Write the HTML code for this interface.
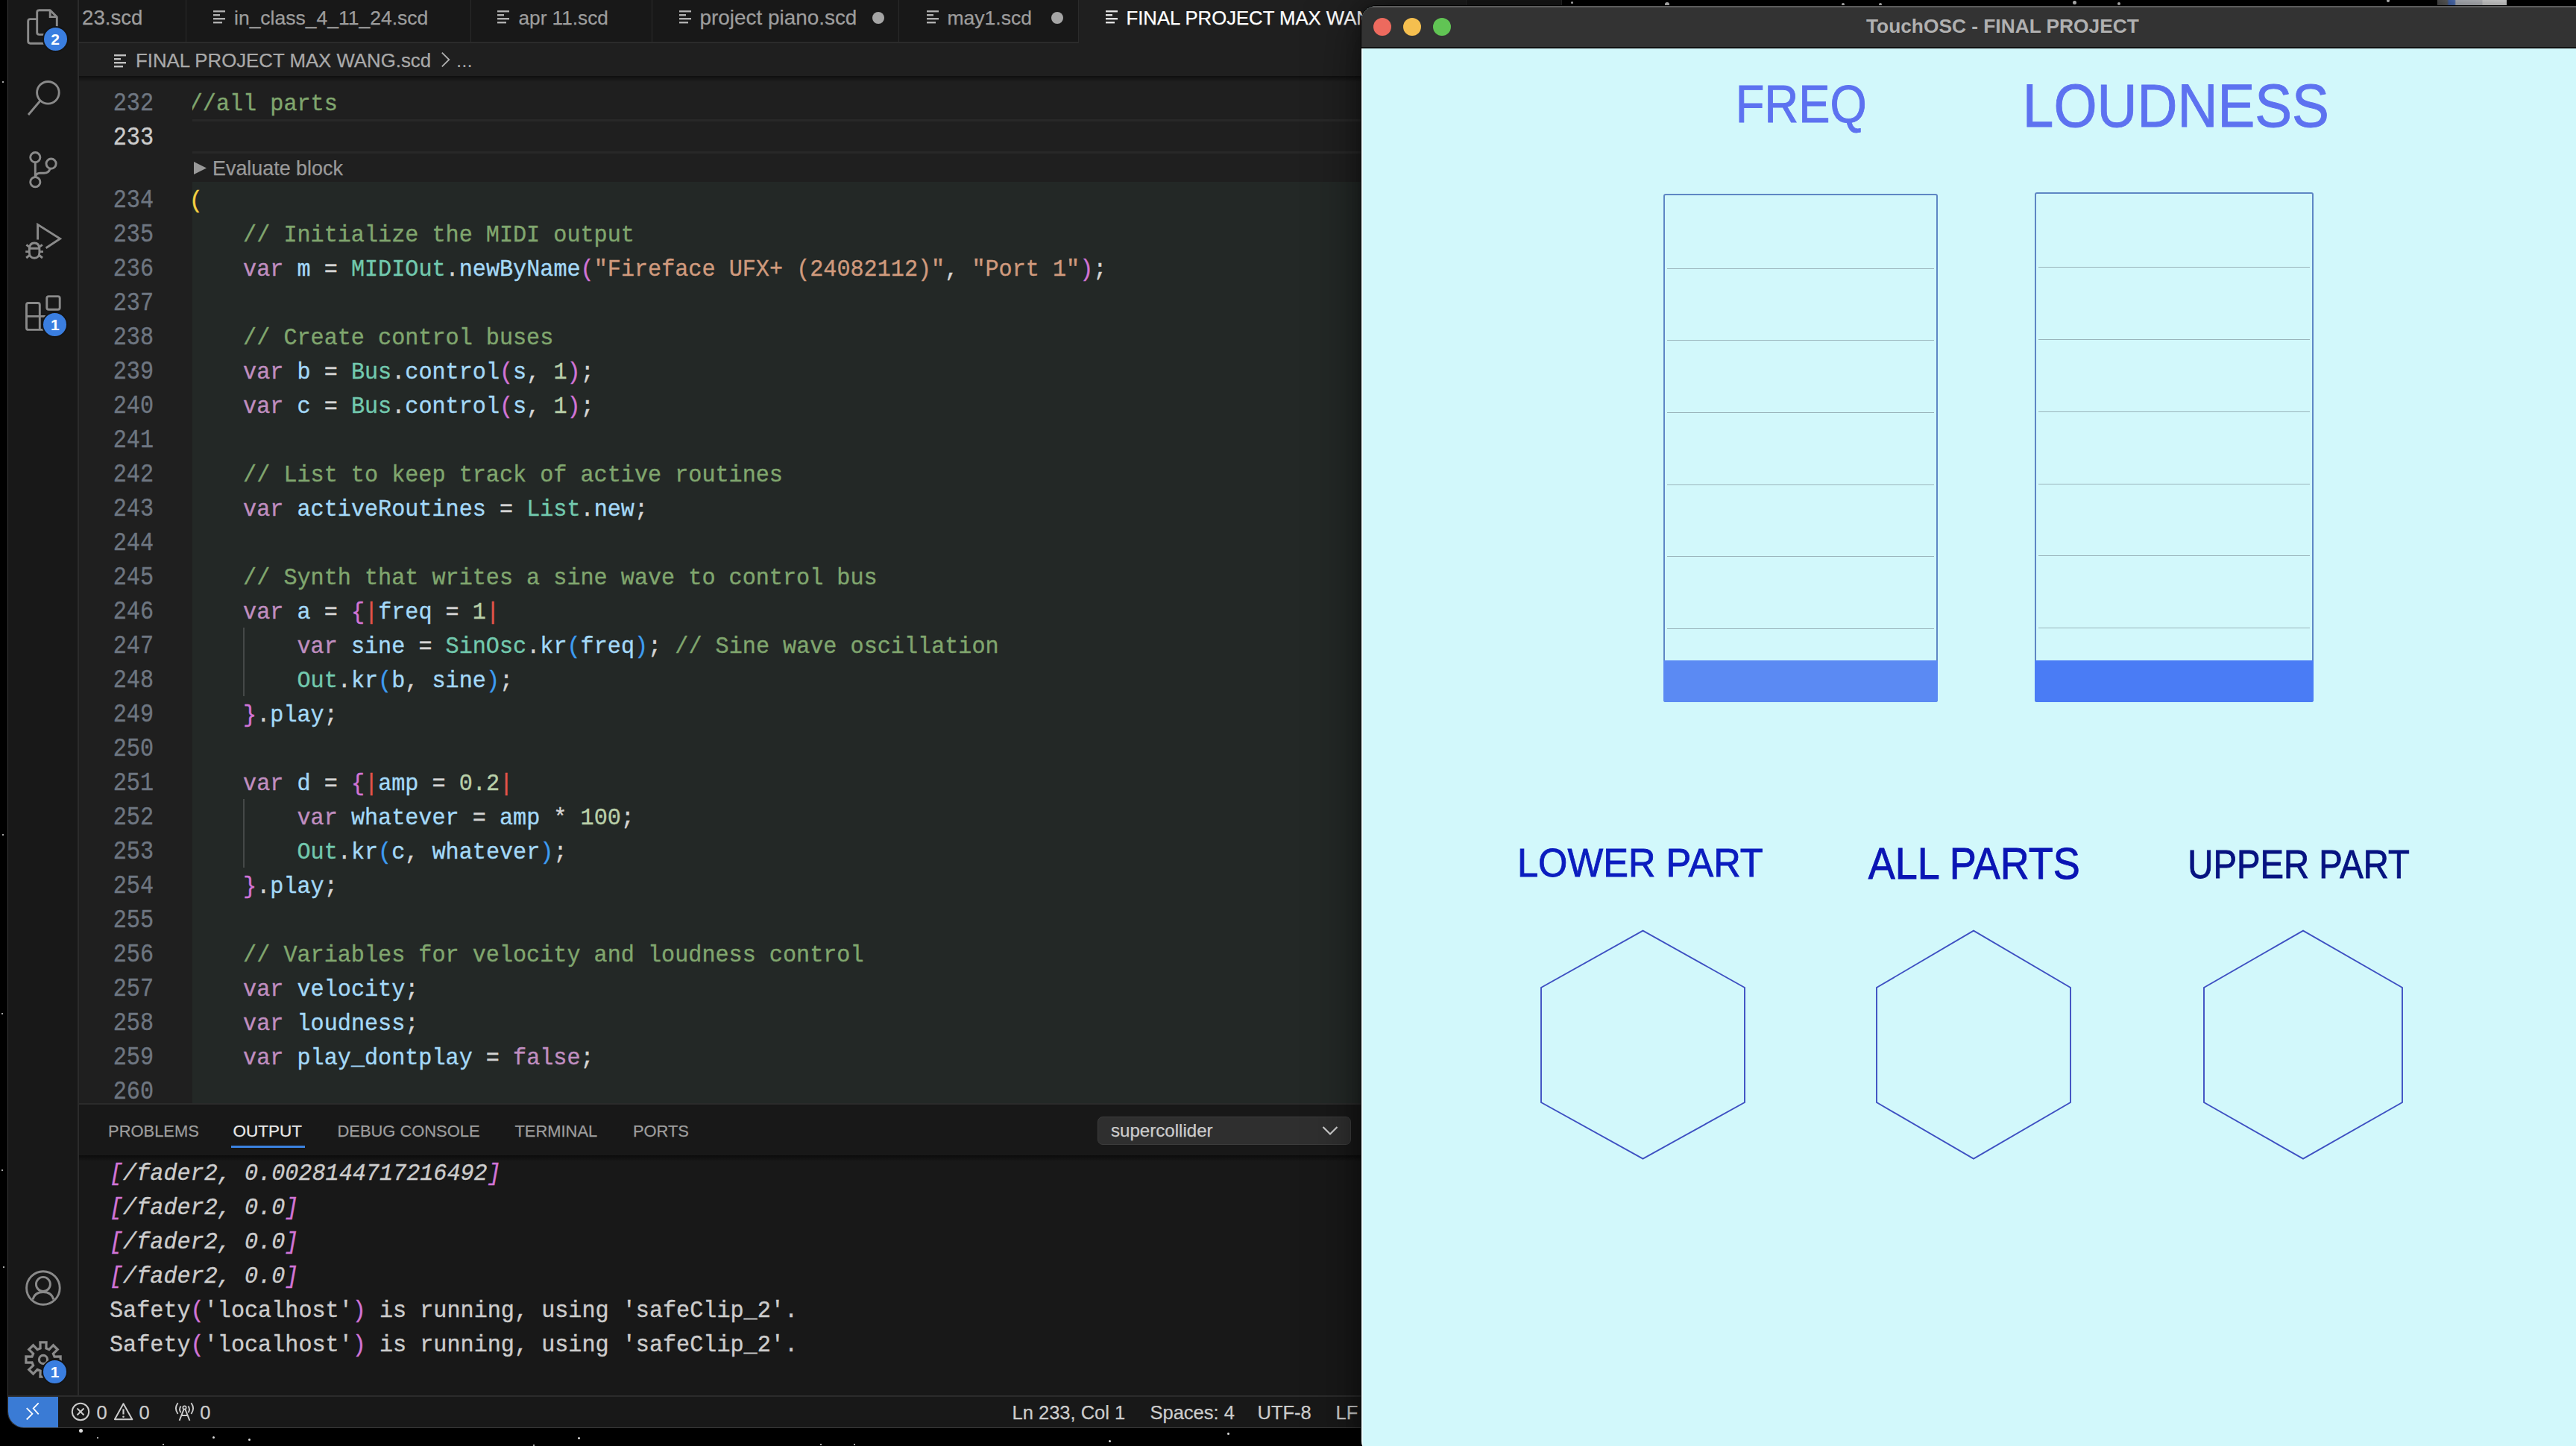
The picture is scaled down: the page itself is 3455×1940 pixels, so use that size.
<!DOCTYPE html><html><head><meta charset="utf-8"><style>
*{margin:0;padding:0;box-sizing:border-box}
html,body{width:3455px;height:1940px;overflow:hidden;background:#000}
body{position:relative;font-family:"Liberation Sans",sans-serif}
.abs{position:absolute}
.mono{font-family:"Liberation Mono",monospace}
.k{color:#c08ec0}.v{color:#a4d9f8}.c{color:#72c9ae}.n{color:#b9d0a9}.s{color:#d09a7d}.m{color:#80a66e}.p{color:#d4d4d4}
.y{color:#f5d142}.u{color:#d174d6}.b{color:#3d9df2}.r{color:#e5534b}
.cl{position:absolute;transform:scaleY(1.06);transform-origin:0 31px;left:-4.3px;-webkit-text-stroke:0.35px currentColor;height:46px;line-height:46px;font-size:30.17px;white-space:pre;font-family:"Liberation Mono",monospace;color:#d4d4d4}
.ln{position:absolute;transform:scaleY(1.14);transform-origin:0 31px;-webkit-text-stroke:0.3px currentColor;left:105px;width:101px;text-align:right;height:46px;line-height:46px;font-size:30.17px;white-space:pre;font-family:"Liberation Mono",monospace;color:#6e7681}
.tab{position:absolute;top:-20px;height:76px;background:#181818;border-right:1px solid #2b2b2b;border-bottom:1px solid #2b2b2b}
.tt{position:absolute;top:0;font-size:26.5px;line-height:76px;white-space:pre;color:#9d9d9d}
.ficon{position:absolute}
.ptab{position:absolute;top:1481px;height:69px;line-height:88px;font-size:21.9px;color:#9d9d9d;white-space:pre}
.ol{position:absolute;transform:scaleY(1.06);transform-origin:0 31px;-webkit-text-stroke:0.35px currentColor;left:147.0px;height:46px;line-height:46px;font-size:30.17px;white-space:pre;font-family:"Liberation Mono",monospace;color:#cccccc}
.sb{position:absolute;-webkit-text-stroke:0.25px currentColor;top:1874px;height:43px;line-height:43px;font-size:25.5px;color:#cccccc;white-space:pre}
</style></head><body>
<div class="abs" style="left:2107px;top:2px;width:3px;height:3px;border-radius:50%;background:#ddd"></div>
<div class="abs" style="left:2233px;top:3px;width:6px;height:6px;border-radius:50%;background:#ddd"></div>
<div class="abs" style="left:2470px;top:4px;width:4px;height:4px;border-radius:50%;background:#ddd"></div>
<div class="abs" style="left:2520px;top:4px;width:4px;height:4px;border-radius:50%;background:#ddd"></div>
<div class="abs" style="left:2780px;top:1px;width:5px;height:5px;border-radius:50%;background:#ddd"></div>
<div class="abs" style="left:2840px;top:3px;width:4px;height:4px;border-radius:50%;background:#ddd"></div>
<div class="abs" style="left:3201px;top:-1px;width:4px;height:4px;border-radius:50%;background:#ddd"></div>
<div class="abs" style="left:106px;top:1917px;width:5px;height:5px;border-radius:50%;background:#ddd"></div>
<div class="abs" style="left:130px;top:1928px;width:2px;height:2px;border-radius:50%;background:#ddd"></div>
<div class="abs" style="left:218px;top:1937px;width:2px;height:2px;border-radius:50%;background:#ddd"></div>
<div class="abs" style="left:285px;top:1927px;width:3px;height:3px;border-radius:50%;background:#ddd"></div>
<div class="abs" style="left:333px;top:1930px;width:3px;height:3px;border-radius:50%;background:#ddd"></div>
<div class="abs" style="left:715px;top:1938px;width:2px;height:2px;border-radius:50%;background:#ddd"></div>
<div class="abs" style="left:775px;top:1928px;width:3px;height:3px;border-radius:50%;background:#ddd"></div>
<div class="abs" style="left:1100px;top:1937px;width:2px;height:2px;border-radius:50%;background:#ddd"></div>
<div class="abs" style="left:1145px;top:1937px;width:2px;height:2px;border-radius:50%;background:#ddd"></div>
<div class="abs" style="left:1487px;top:1932px;width:3px;height:3px;border-radius:50%;background:#ddd"></div>
<div class="abs" style="left:1646px;top:1922px;width:3px;height:3px;border-radius:50%;background:#ddd"></div>
<div class="abs" style="left:3px;top:109px;width:2px;height:2px;border-radius:50%;background:#ddd"></div>
<div class="abs" style="left:3px;top:1119px;width:2px;height:2px;border-radius:50%;background:#ddd"></div>
<div class="abs" style="left:2px;top:1359px;width:2px;height:2px;border-radius:50%;background:#ddd"></div>
<div class="abs" style="left:2px;top:1569px;width:2px;height:2px;border-radius:50%;background:#ddd"></div>
<div class="abs" style="left:4px;top:1699px;width:2px;height:2px;border-radius:50%;background:#ddd"></div>
<div class="abs" style="left:3269px;top:0;width:93px;height:7px;background:linear-gradient(90deg,#555 0,#666 14%,#4d72c0 17%,#5a80cc 25%,#c4c8d0 27%,#d0d2d6 64%,#ececec 66%,#f2f2f2 100%)"></div>
<div class="abs" style="left:10px;top:-30px;width:2085px;height:1946px;border-bottom-left-radius:22px;overflow:hidden;background:#1f1f1f;border-left:1px solid #3a3a3a;border-bottom:1px solid #3a3a3a">
<div class="abs" style="left:-11px;top:30px;width:2095px;height:1916px">
<div class="abs" style="left:11px;top:-30px;width:95px;height:1903px;background:#181818;border-right:2px solid #2b2b2b"></div>
<div class="abs" style="left:106px;top:-30px;width:1990px;height:88px;background:#181818;border-bottom:2px solid #2b2b2b"></div>
<div class="abs" style="left:106px;top:-30px;width:145px;height:88px;background:#181818;border-right:2px solid #2b2b2b;border-bottom:2px solid #2b2b2b"></div>
<div class="abs" style="left:110.1px;top:4px;height:40px;line-height:40px;font-size:27.6px;white-space:pre;-webkit-text-stroke:0.25px currentColor;color:#9d9d9d">23.scd</div>
<div class="abs" style="left:250px;top:-30px;width:383px;height:88px;background:#181818;border-right:2px solid #2b2b2b;border-bottom:2px solid #2b2b2b"></div>
<svg class="abs" style="left:285.6px;top:13.8px" width="17" height="18" viewBox="0 0 17 18"><rect x="0" y="0" width="16" height="2.4" fill="#b0b0b0"/><rect x="0" y="5" width="9" height="2.4" fill="#b0b0b0"/><rect x="0" y="10" width="16" height="2.4" fill="#b0b0b0"/><rect x="0" y="15" width="12" height="2.4" fill="#b0b0b0"/></svg>
<div class="abs" style="left:314.0px;top:4px;height:40px;line-height:40px;font-size:26.5px;white-space:pre;-webkit-text-stroke:0.25px currentColor;color:#9d9d9d">in_class_4_11_24.scd</div>
<div class="abs" style="left:632px;top:-30px;width:244px;height:88px;background:#181818;border-right:2px solid #2b2b2b;border-bottom:2px solid #2b2b2b"></div>
<svg class="abs" style="left:667px;top:13.8px" width="17" height="18" viewBox="0 0 17 18"><rect x="0" y="0" width="16" height="2.4" fill="#b0b0b0"/><rect x="0" y="5" width="9" height="2.4" fill="#b0b0b0"/><rect x="0" y="10" width="16" height="2.4" fill="#b0b0b0"/><rect x="0" y="15" width="12" height="2.4" fill="#b0b0b0"/></svg>
<div class="abs" style="left:695.5px;top:4px;height:40px;line-height:40px;font-size:26.2px;white-space:pre;-webkit-text-stroke:0.25px currentColor;color:#9d9d9d">apr 11.scd</div>
<div class="abs" style="left:875px;top:-30px;width:332px;height:88px;background:#181818;border-right:2px solid #2b2b2b;border-bottom:2px solid #2b2b2b"></div>
<svg class="abs" style="left:911px;top:13.8px" width="17" height="18" viewBox="0 0 17 18"><rect x="0" y="0" width="16" height="2.4" fill="#b0b0b0"/><rect x="0" y="5" width="9" height="2.4" fill="#b0b0b0"/><rect x="0" y="10" width="16" height="2.4" fill="#b0b0b0"/><rect x="0" y="15" width="12" height="2.4" fill="#b0b0b0"/></svg>
<div class="abs" style="left:938.5px;top:4px;height:40px;line-height:40px;font-size:27.9px;white-space:pre;-webkit-text-stroke:0.25px currentColor;color:#9d9d9d">project piano.scd</div>
<div class="abs" style="left:1170px;top:16px;width:16px;height:16px;border-radius:50%;background:#a5a5a5"></div>
<div class="abs" style="left:1206px;top:-30px;width:242px;height:88px;background:#181818;border-right:2px solid #2b2b2b;border-bottom:2px solid #2b2b2b"></div>
<svg class="abs" style="left:1243px;top:13.8px" width="17" height="18" viewBox="0 0 17 18"><rect x="0" y="0" width="16" height="2.4" fill="#b0b0b0"/><rect x="0" y="5" width="9" height="2.4" fill="#b0b0b0"/><rect x="0" y="10" width="16" height="2.4" fill="#b0b0b0"/><rect x="0" y="15" width="12" height="2.4" fill="#b0b0b0"/></svg>
<div class="abs" style="left:1270.5px;top:4px;height:40px;line-height:40px;font-size:26.5px;white-space:pre;-webkit-text-stroke:0.25px currentColor;color:#9d9d9d">may1.scd</div>
<div class="abs" style="left:1409.5px;top:16px;width:16px;height:16px;border-radius:50%;background:#a5a5a5"></div>
<div class="abs" style="left:1447px;top:-30px;width:521px;height:88px;background:#1f1f1f;border-right:2px solid #2b2b2b;border-bottom:none"></div>
<svg class="abs" style="left:1483px;top:13.8px" width="17" height="18" viewBox="0 0 17 18"><rect x="0" y="0" width="16" height="2.4" fill="#e0e0e0"/><rect x="0" y="5" width="9" height="2.4" fill="#e0e0e0"/><rect x="0" y="10" width="16" height="2.4" fill="#e0e0e0"/><rect x="0" y="15" width="12" height="2.4" fill="#e0e0e0"/></svg>
<div class="abs" style="left:1510.5px;top:4px;height:40px;line-height:40px;font-size:25.7px;white-space:pre;-webkit-text-stroke:0.25px currentColor;color:#ffffff">FINAL PROJECT MAX WANG.scd</div>
<div class="abs" style="left:1967px;top:-30px;width:129px;height:88px;background:#181818;border-right:2px solid #2b2b2b;border-bottom:2px solid #2b2b2b"></div>
<div class="abs" style="left:106px;top:58px;width:1990px;height:44px;background:#1f1f1f"></div>
<svg class="abs" style="left:153px;top:72.5px" width="17" height="18" viewBox="0 0 17 18"><rect x="0" y="0" width="16" height="2.4" fill="#c0c0c0"/><rect x="0" y="5" width="9" height="2.4" fill="#c0c0c0"/><rect x="0" y="10" width="16" height="2.4" fill="#c0c0c0"/><rect x="0" y="15" width="12" height="2.4" fill="#c0c0c0"/></svg>
<div class="abs" style="left:182px;top:61px;height:40px;line-height:40px;font-size:25.8px;white-space:pre;-webkit-text-stroke:0.25px currentColor;color:#a9a9a9">FINAL PROJECT MAX WANG.scd</div>
<svg class="abs" style="left:590px;top:69px" width="16" height="22" viewBox="0 0 16 22"><path d="M2.8 1.6 L12.3 11 L2.8 20.4" stroke="#b0b0b0" stroke-width="1.8" fill="none"/></svg>
<div class="abs" style="left:612px;top:61px;height:40px;line-height:40px;font-size:25.9px;white-space:pre;color:#a9a9a9">...</div>
<div class="abs" style="left:106px;top:102px;width:1990px;height:1378px;background:#1f1f1f;overflow:hidden">
<div class="abs" style="left:0;top:0;width:1990px;height:1379px">
</div></div>
<div class="abs" style="left:258px;top:244px;width:1837px;height:1237px;background:#232826"></div>
<div class="abs" style="left:258px;top:160px;width:1837px;height:46px;border-top:3px solid #282828;border-bottom:3px solid #282828"></div>
<div class="abs" style="left:106px;top:102px;width:1990px;height:8px;background:linear-gradient(#0f0f0f,rgba(31,31,31,0))"></div>
<div class="abs" style="left:326px;top:842px;width:2px;height:92px;background:#454948"></div>
<div class="abs" style="left:326px;top:1072px;width:2px;height:92px;background:#454948"></div>
<div class="ln" style="top:117px;color:#6e7681">232</div>
<div class="ln" style="top:163px;color:#cccccc">233</div>
<div class="ln" style="top:247px;color:#6e7681">234</div>
<div class="ln" style="top:293px;color:#6e7681">235</div>
<div class="ln" style="top:339px;color:#6e7681">236</div>
<div class="ln" style="top:385px;color:#6e7681">237</div>
<div class="ln" style="top:431px;color:#6e7681">238</div>
<div class="ln" style="top:477px;color:#6e7681">239</div>
<div class="ln" style="top:523px;color:#6e7681">240</div>
<div class="ln" style="top:569px;color:#6e7681">241</div>
<div class="ln" style="top:615px;color:#6e7681">242</div>
<div class="ln" style="top:661px;color:#6e7681">243</div>
<div class="ln" style="top:707px;color:#6e7681">244</div>
<div class="ln" style="top:753px;color:#6e7681">245</div>
<div class="ln" style="top:799px;color:#6e7681">246</div>
<div class="ln" style="top:845px;color:#6e7681">247</div>
<div class="ln" style="top:891px;color:#6e7681">248</div>
<div class="ln" style="top:937px;color:#6e7681">249</div>
<div class="ln" style="top:983px;color:#6e7681">250</div>
<div class="ln" style="top:1029px;color:#6e7681">251</div>
<div class="ln" style="top:1075px;color:#6e7681">252</div>
<div class="ln" style="top:1121px;color:#6e7681">253</div>
<div class="ln" style="top:1167px;color:#6e7681">254</div>
<div class="ln" style="top:1213px;color:#6e7681">255</div>
<div class="ln" style="top:1259px;color:#6e7681">256</div>
<div class="ln" style="top:1305px;color:#6e7681">257</div>
<div class="ln" style="top:1351px;color:#6e7681">258</div>
<div class="ln" style="top:1397px;color:#6e7681">259</div>
<div class="ln" style="top:1443px;color:#6e7681">260</div>
<div class="abs" style="left:258px;top:102px;width:1837px;height:1379px;overflow:hidden">
<div class="cl" style="top:15px"><span class="m">//all parts</span></div>
<div class="cl" style="top:145px"><span class="y">(</span></div>
<div class="cl" style="top:191px"><span class="p">    </span><span class="m">// Initialize the MIDI output</span></div>
<div class="cl" style="top:237px"><span class="p">    </span><span class="k">var</span><span class="p"> </span><span class="v">m</span><span class="p"> = </span><span class="c">MIDIOut</span><span class="p">.</span><span class="v">newByName</span><span class="u">(</span><span class="s">"Fireface UFX+ (24082112)"</span><span class="p">, </span><span class="s">"Port 1"</span><span class="u">)</span><span class="p">;</span></div>
<div class="cl" style="top:329px"><span class="p">    </span><span class="m">// Create control buses</span></div>
<div class="cl" style="top:375px"><span class="p">    </span><span class="k">var</span><span class="p"> </span><span class="v">b</span><span class="p"> = </span><span class="c">Bus</span><span class="p">.</span><span class="v">control</span><span class="u">(</span><span class="v">s</span><span class="p">, </span><span class="n">1</span><span class="u">)</span><span class="p">;</span></div>
<div class="cl" style="top:421px"><span class="p">    </span><span class="k">var</span><span class="p"> </span><span class="v">c</span><span class="p"> = </span><span class="c">Bus</span><span class="p">.</span><span class="v">control</span><span class="u">(</span><span class="v">s</span><span class="p">, </span><span class="n">1</span><span class="u">)</span><span class="p">;</span></div>
<div class="cl" style="top:513px"><span class="p">    </span><span class="m">// List to keep track of active routines</span></div>
<div class="cl" style="top:559px"><span class="p">    </span><span class="k">var</span><span class="p"> </span><span class="v">activeRoutines</span><span class="p"> = </span><span class="c">List</span><span class="p">.</span><span class="v">new</span><span class="p">;</span></div>
<div class="cl" style="top:651px"><span class="p">    </span><span class="m">// Synth that writes a sine wave to control bus</span></div>
<div class="cl" style="top:697px"><span class="p">    </span><span class="k">var</span><span class="p"> </span><span class="v">a</span><span class="p"> = </span><span class="u">{</span><span class="r">|</span><span class="v">freq</span><span class="p"> = </span><span class="n">1</span><span class="r">|</span></div>
<div class="cl" style="top:743px"><span class="p">        </span><span class="k">var</span><span class="p"> </span><span class="v">sine</span><span class="p"> = </span><span class="c">SinOsc</span><span class="p">.</span><span class="v">kr</span><span class="b">(</span><span class="v">freq</span><span class="b">)</span><span class="p">; </span><span class="m">// Sine wave oscillation</span></div>
<div class="cl" style="top:789px"><span class="p">        </span><span class="c">Out</span><span class="p">.</span><span class="v">kr</span><span class="b">(</span><span class="v">b</span><span class="p">, </span><span class="v">sine</span><span class="b">)</span><span class="p">;</span></div>
<div class="cl" style="top:835px"><span class="p">    </span><span class="u">}</span><span class="p">.</span><span class="v">play</span><span class="p">;</span></div>
<div class="cl" style="top:927px"><span class="p">    </span><span class="k">var</span><span class="p"> </span><span class="v">d</span><span class="p"> = </span><span class="u">{</span><span class="r">|</span><span class="v">amp</span><span class="p"> = </span><span class="n">0.2</span><span class="r">|</span></div>
<div class="cl" style="top:973px"><span class="p">        </span><span class="k">var</span><span class="p"> </span><span class="v">whatever</span><span class="p"> = </span><span class="v">amp</span><span class="p"> * </span><span class="n">100</span><span class="p">;</span></div>
<div class="cl" style="top:1019px"><span class="p">        </span><span class="c">Out</span><span class="p">.</span><span class="v">kr</span><span class="b">(</span><span class="v">c</span><span class="p">, </span><span class="v">whatever</span><span class="b">)</span><span class="p">;</span></div>
<div class="cl" style="top:1065px"><span class="p">    </span><span class="u">}</span><span class="p">.</span><span class="v">play</span><span class="p">;</span></div>
<div class="cl" style="top:1157px"><span class="p">    </span><span class="m">// Variables for velocity and loudness control</span></div>
<div class="cl" style="top:1203px"><span class="p">    </span><span class="k">var</span><span class="p"> </span><span class="v">velocity</span><span class="p">;</span></div>
<div class="cl" style="top:1249px"><span class="p">    </span><span class="k">var</span><span class="p"> </span><span class="v">loudness</span><span class="p">;</span></div>
<div class="cl" style="top:1295px"><span class="p">    </span><span class="k">var</span><span class="p"> </span><span class="v">play_dontplay</span><span class="p"> = </span><span class="k">false</span><span class="p">;</span></div>
</div>
<svg class="abs" style="left:260px;top:217px" width="18" height="18" viewBox="0 0 18 18"><path d="M0 0 L17 8.5 L0 17 Z" fill="#999999"/></svg>
<div class="abs" style="left:285px;top:206px;height:40px;line-height:40px;font-size:26.9px;white-space:pre;-webkit-text-stroke:0.25px currentColor;color:#999999">Evaluate block</div>
<div class="abs" style="left:106px;top:1480px;width:1990px;height:393px;background:#181818;border-top:2px solid #2b2b2b"></div>
<div class="abs" style="left:145.1px;top:1498px;height:40px;line-height:40px;font-size:21.9px;white-space:pre;-webkit-text-stroke:0.25px currentColor;color:#9d9d9d">PROBLEMS</div>
<div class="abs" style="left:312.4px;top:1498px;height:40px;line-height:40px;font-size:22.5px;white-space:pre;-webkit-text-stroke:0.25px currentColor;color:#e7e7e7">OUTPUT</div>
<div class="abs" style="left:452.5px;top:1498px;height:40px;line-height:40px;font-size:21.9px;white-space:pre;-webkit-text-stroke:0.25px currentColor;color:#9d9d9d">DEBUG CONSOLE</div>
<div class="abs" style="left:690.5px;top:1498px;height:40px;line-height:40px;font-size:21.9px;white-space:pre;-webkit-text-stroke:0.25px currentColor;color:#9d9d9d">TERMINAL</div>
<div class="abs" style="left:848.9px;top:1498px;height:40px;line-height:40px;font-size:21.9px;white-space:pre;-webkit-text-stroke:0.25px currentColor;color:#9d9d9d">PORTS</div>
<div class="abs" style="left:310px;top:1537px;width:99px;height:3px;background:#3b82e0"></div>
<div class="abs" style="left:1472px;top:1498px;width:340px;height:38px;background:#2f2f2f;border:1px solid #3c3c3c;border-radius:7px"></div>
<div class="abs" style="left:1490px;top:1497px;height:40px;line-height:40px;font-size:24.1px;white-space:pre;-webkit-text-stroke:0.25px currentColor;color:#cccccc">supercollider</div>
<svg class="abs" style="left:1773px;top:1510px" width="22" height="14" viewBox="0 0 22 14"><path d="M1.5 2 L11 11.5 L20.5 2" stroke="#cccccc" stroke-width="2.2" fill="none"/></svg>
<div class="abs" style="left:106px;top:1550px;width:1990px;height:8px;background:linear-gradient(#0c0c0c,rgba(24,24,24,0))"></div>
<div class="ol" style="top:1552px;font-style:italic"><span class="u">[</span>/fader2, 0.0028144717216492<span class="u">]</span></div>
<div class="ol" style="top:1598px;font-style:italic"><span class="u">[</span>/fader2, 0.0<span class="u">]</span></div>
<div class="ol" style="top:1644px;font-style:italic"><span class="u">[</span>/fader2, 0.0<span class="u">]</span></div>
<div class="ol" style="top:1690px;font-style:italic"><span class="u">[</span>/fader2, 0.0<span class="u">]</span></div>
<div class="ol" style="top:1736px">Safety<span class="u">(</span>'localhost'<span class="u">)</span> is running, using 'safeClip_2'.</div>
<div class="ol" style="top:1782px">Safety<span class="u">(</span>'localhost'<span class="u">)</span> is running, using 'safeClip_2'.</div>
<div class="abs" style="left:11px;top:1872px;width:2084px;height:44px;background:#181818;border-top:2px solid #2b2b2b"></div>
<div class="abs" style="left:11px;top:1874px;width:67px;height:42px;background:#3a7bd5"></div>
<svg class="abs" style="left:34px;top:1882px" width="22" height="24" viewBox="0 0 22 24"><path d="M1.7 7.2 L9.4 14.8 L1.7 22.5 M17.7 0.4 L10.7 7.6 L17.7 15.3" stroke="#ffffff" stroke-width="1.8" fill="none"/></svg>
<svg class="abs" style="left:95px;top:1881px" width="26" height="26" viewBox="0 0 26 26"><circle cx="13" cy="13" r="11.2" stroke="#cccccc" stroke-width="2" fill="none"/><path d="M8.5 8.5 L17.5 17.5 M17.5 8.5 L8.5 17.5" stroke="#cccccc" stroke-width="2"/></svg>
<div class="sb" style="left:129.5px">0</div>
<svg class="abs" style="left:152.5px;top:1881.5px" width="26" height="24" viewBox="0 0 26 24"><path d="M12.5 1.2 L24.3 22.3 L0.9 22.3 Z" stroke="#cccccc" stroke-width="2" fill="none" stroke-linejoin="round"/><path d="M12.5 8.5 L12.5 15.5" stroke="#cccccc" stroke-width="2.2"/><circle cx="12.5" cy="18.8" r="1.3" fill="#cccccc"/></svg>
<div class="sb" style="left:186.5px">0</div>
<svg class="abs" style="left:230px;top:1878px" width="32" height="32" viewBox="0 0 32 32"><path d="M12.6 8.6 Q9.4 12.9 12.6 17.2 M22.4 8.6 Q25.6 12.9 22.4 17.2 M8.6 4.2 Q3.2 11.6 8.6 19 M26.4 4.2 Q31.8 11.6 26.4 19" stroke="#cccccc" stroke-width="1.9" fill="none"/><circle cx="17.5" cy="10.5" r="2.2" stroke="#cccccc" stroke-width="1.7" fill="none"/><path d="M16.6 12.6 L10.6 27.8 M18.4 12.6 L24.4 27.8 M13.3 21 H21.7" stroke="#cccccc" stroke-width="1.9" fill="none"/></svg>
<div class="sb" style="left:268.3px">0</div>
<div class="sb" style="left:1357.5px">Ln 233, Col 1</div>
<div class="sb" style="left:1542.5px">Spaces: 4</div>
<div class="sb" style="left:1686.5px">UTF-8</div>
<div class="sb" style="left:1791.5px">LF</div>
<svg class="abs" style="left:25px;top:5px" width="70" height="70" viewBox="0 0 70 70"><path d="M27.5 8.7 H42.3 L51.3 17.7 V38.5 Q51.3 41.4 48.4 41.4 H27.6 Q24.7 41.4 24.7 38.5 V11.6 Q24.7 8.7 27.6 8.7 Z" stroke="#8a8a8a" stroke-width="2.9" fill="none" stroke-linejoin="round"/><path d="M42.2 8.7 V17.6 H51.3" stroke="#8a8a8a" stroke-width="2.9" fill="none"/><path d="M24.7 20.6 H15.6 Q12.7 20.6 12.7 23.5 V50.3 Q12.7 53.2 15.6 53.2 H36 Q38.9 53.2 38.9 50.3 V41.4" stroke="#8a8a8a" stroke-width="2.9" fill="none" stroke-linejoin="round"/></svg>
<div class="abs" style="left:56.599999999999994px;top:34.7px;width:35px;height:35px;border-radius:50%;background:#3a7ee0;border:2px solid #141414;color:#fff;font-weight:bold;font-size:21px;line-height:31px;text-align:center">2</div>
<svg class="abs" style="left:25px;top:95px" width="70" height="70" viewBox="0 0 70 70"><circle cx="39.4" cy="29.3" r="14.8" stroke="#8a8a8a" stroke-width="2.9" fill="none"/><path d="M28.7 40.5 L13 59" stroke="#8a8a8a" stroke-width="2.9" fill="none"/></svg>
<svg class="abs" style="left:25px;top:190px" width="70" height="70" viewBox="0 0 70 70"><circle cx="22.3" cy="21.1" r="6.6" stroke="#8a8a8a" stroke-width="2.9" fill="none"/><circle cx="43.6" cy="29.6" r="6.6" stroke="#8a8a8a" stroke-width="2.9" fill="none"/><circle cx="22.3" cy="54.2" r="6.6" stroke="#8a8a8a" stroke-width="2.9" fill="none"/><path d="M22.3 27.7 V47.6 M42.2 36.1 Q40.5 42.3 34 42.3 H28.5 Q23.5 42.3 22.3 47.6" stroke="#8a8a8a" stroke-width="2.9" fill="none"/></svg>
<svg class="abs" style="left:25px;top:280px" width="70" height="70" viewBox="0 0 70 70"><path d="M25.6 41.6 V21.3 L55.6 40.2 L36.6 52.8" stroke="#8a8a8a" stroke-width="2.9" fill="none" stroke-linejoin="miter"/><path d="M21.1 46 Q14.6 46 14.3 54 V59 Q14.6 66.2 21.1 66.2 Q27.6 66.2 27.9 59 V54 Q27.6 46 21.1 46 Z" stroke="#8a8a8a" stroke-width="2.9" fill="none"/><path d="M15 53.2 H27.3 M10.4 48.3 L15.3 52 M31.8 48.3 L26.9 52 M9.2 57.6 H14.3 M33 57.6 H27.9 M10.2 66 L14.6 62.5 M32 66 L27.6 62.5" stroke="#8a8a8a" stroke-width="2.9" fill="none"/></svg>
<svg class="abs" style="left:25px;top:385px" width="70" height="70" viewBox="0 0 70 70"><rect x="37.8" y="12.6" width="17.4" height="17.7" rx="2.5" stroke="#8a8a8a" stroke-width="2.9" fill="none"/><path d="M13 21.5 H25.8 Q28.3 21.5 28.3 24 V39.4 H43.3 Q45.8 39.4 45.8 41.9 V54.9 Q45.8 57.4 43.3 57.4 H13 Q10.5 57.4 10.5 54.9 V24 Q10.5 21.5 13 21.5 Z M10.5 39.4 H28.3 V57.4" stroke="#8a8a8a" stroke-width="2.9" fill="none" stroke-linejoin="round"/></svg>
<div class="abs" style="left:56.400000000000006px;top:417.8px;width:35px;height:35px;border-radius:50%;background:#3a7ee0;border:2px solid #141414;color:#fff;font-weight:bold;font-size:21px;line-height:31px;text-align:center">1</div>
<svg class="abs" style="left:25px;top:1690px" width="70" height="70" viewBox="0 0 70 70"><circle cx="32.9" cy="38" r="22.3" stroke="#8a8a8a" stroke-width="2.9" fill="none"/><circle cx="32.9" cy="32.9" r="9.5" stroke="#8a8a8a" stroke-width="2.9" fill="none"/><path d="M19 53.5 Q21.5 43.5 32.9 43.5 Q44.3 43.5 46.8 53.5" stroke="#8a8a8a" stroke-width="2.9" fill="none"/></svg>
<svg class="abs" style="left:33px;top:1799px" width="50" height="50" viewBox="0 0 50 50"><path d="M20.92 1.86 L29.08 1.86 L28.88 9.99 L32.87 11.64 L38.48 5.75 L44.25 11.52 L38.36 17.13 L40.01 21.12 L48.14 20.92 L48.14 29.08 L40.01 28.88 L38.36 32.87 L44.25 38.48 L38.48 44.25 L32.87 38.36 L28.88 40.01 L29.08 48.14 L20.92 48.14 L21.12 40.01 L17.13 38.36 L11.52 44.25 L5.75 38.48 L11.64 32.87 L9.99 28.88 L1.86 29.08 L1.86 20.92 L9.99 21.12 L11.64 17.13 L5.75 11.52 L11.52 5.75 L17.13 11.64 L21.12 9.99 Z" stroke="#8a8a8a" stroke-width="3.2" fill="none" stroke-linejoin="miter"/><circle cx="25" cy="25" r="5.6" stroke="#8a8a8a" stroke-width="3.2" fill="none"/></svg>
<div class="abs" style="left:56.2px;top:1822.5px;width:35px;height:35px;border-radius:50%;background:#3a7ee0;border:2px solid #141414;color:#fff;font-weight:bold;font-size:21px;line-height:31px;text-align:center">1</div>
</div></div>
<div class="abs" style="left:1826px;top:8px;width:1700px;height:1945px;border-radius:20px;overflow:hidden;background:#d2f8fb;box-shadow:0 0 0 1px #000,0 10px 70px rgba(0,0,0,0.5),0 0 20px rgba(0,0,0,0.3)">
<div class="abs" style="left:-1826px;top:-8px;width:3455px;height:1940px">
<div class="abs" style="left:1826px;top:64px;width:2px;height:1900px;background:rgba(255,255,255,0.55)"></div>
<div class="abs" style="left:1826px;top:8px;width:1700px;height:57px;background:#333333;border-top:2px solid #5c5c5c;border-bottom:2px solid #111"></div>
<div class="abs" style="left:1841.6px;top:24.000000000000004px;width:24.4px;height:24.4px;border-radius:50%;background:#ed6a5e"></div>
<div class="abs" style="left:1881.8px;top:24.000000000000004px;width:24.4px;height:24.4px;border-radius:50%;background:#f5bf4f"></div>
<div class="abs" style="left:1921.5px;top:24.000000000000004px;width:24.4px;height:24.4px;border-radius:50%;background:#61c454"></div>
<div class="abs" style="left:2503px;top:15px;height:40px;line-height:40px;font-size:26.3px;font-weight:bold;white-space:pre;color:#b0b0b0">TouchOSC - FINAL PROJECT</div>
<svg class="abs" style="left:0;top:0" width="3455" height="1940"><text x="0" y="164.10" transform="translate(2327.81 0) scale(0.9072 1)" font-family="Liberation Sans" font-size="69.77" fill="#5d72f0" stroke="#5d72f0" stroke-width="0.9">FREQ</text></svg>
<svg class="abs" style="left:0;top:0" width="3455" height="1940"><text x="0" y="169.80" transform="translate(2712.87 0) scale(0.9196 1)" font-family="Liberation Sans" font-size="81.25" fill="#5d72f0" stroke="#5d72f0" stroke-width="0.9">LOUDNESS</text></svg>
<svg class="abs" style="left:0;top:0" width="3455" height="1940"><text x="0" y="1175.80" transform="translate(2034.95 0) scale(0.9304 1)" font-family="Liberation Sans" font-size="54.36" fill="#0b1dbf" stroke="#0b1dbf" stroke-width="0.9">LOWER PART</text></svg>
<svg class="abs" style="left:0;top:0" width="3455" height="1940"><text x="0" y="1179.00" transform="translate(2505.79 0) scale(0.9166 1)" font-family="Liberation Sans" font-size="58.87" fill="#0a15b4" stroke="#0a15b4" stroke-width="0.9">ALL PARTS</text></svg>
<svg class="abs" style="left:0;top:0" width="3455" height="1940"><text x="0" y="1177.70" transform="translate(2934.25 0) scale(0.8958 1)" font-family="Liberation Sans" font-size="52.76" fill="#061380" stroke="#061380" stroke-width="0.9">UPPER PART</text></svg>
<div class="abs" style="left:2231px;top:260px;width:368px;height:682px;border:2px solid #5e87c4;border-radius:3px"></div><div class="abs" style="left:2236px;top:359.7px;width:358px;height:1.3px;background:#9ab5bb"></div><div class="abs" style="left:2236px;top:455.7px;width:358px;height:1.3px;background:#9ab5bb"></div><div class="abs" style="left:2236px;top:552.7px;width:358px;height:1.3px;background:#9ab5bb"></div><div class="abs" style="left:2236px;top:649.7px;width:358px;height:1.3px;background:#9ab5bb"></div><div class="abs" style="left:2236px;top:745.7px;width:358px;height:1.3px;background:#9ab5bb"></div><div class="abs" style="left:2236px;top:842.7px;width:358px;height:1.3px;background:#9ab5bb"></div><div class="abs" style="left:2231px;top:886px;width:368px;height:56px;background:#5b8af3;border-radius:0 0 3px 3px"></div>
<div class="abs" style="left:2729px;top:258px;width:374px;height:684px;border:2px solid #5e87c4;border-radius:3px"></div><div class="abs" style="left:2734px;top:357.7px;width:364px;height:1.3px;background:#9ab5bb"></div><div class="abs" style="left:2734px;top:454.7px;width:364px;height:1.3px;background:#9ab5bb"></div><div class="abs" style="left:2734px;top:551.7px;width:364px;height:1.3px;background:#9ab5bb"></div><div class="abs" style="left:2734px;top:648.7px;width:364px;height:1.3px;background:#9ab5bb"></div><div class="abs" style="left:2734px;top:744.7px;width:364px;height:1.3px;background:#9ab5bb"></div><div class="abs" style="left:2734px;top:841.7px;width:364px;height:1.3px;background:#9ab5bb"></div><div class="abs" style="left:2729px;top:886px;width:374px;height:56px;background:#4a7cf5;border-radius:0 0 3px 3px"></div>
<svg class="abs" style="left:0;top:0" width="3455" height="1940">
<polygon points="2203.5,1248.6 2340.0,1325.0 2340.0,1479.0 2203.5,1554.6 2067.0,1479.0 2067.0,1325.0" fill="none" stroke="#3e50c2" stroke-width="1.9"/>
<polygon points="2647.0,1248.6 2777.0,1325.0 2777.0,1479.0 2647.0,1554.6 2517.0,1479.0 2517.0,1325.0" fill="none" stroke="#3e50c2" stroke-width="1.9"/>
<polygon points="3089.0,1248.6 3222.0,1325.0 3222.0,1479.0 3089.0,1554.6 2956.0,1479.0 2956.0,1325.0" fill="none" stroke="#3e50c2" stroke-width="1.9"/>
</svg>
</div></div>
</body></html>
